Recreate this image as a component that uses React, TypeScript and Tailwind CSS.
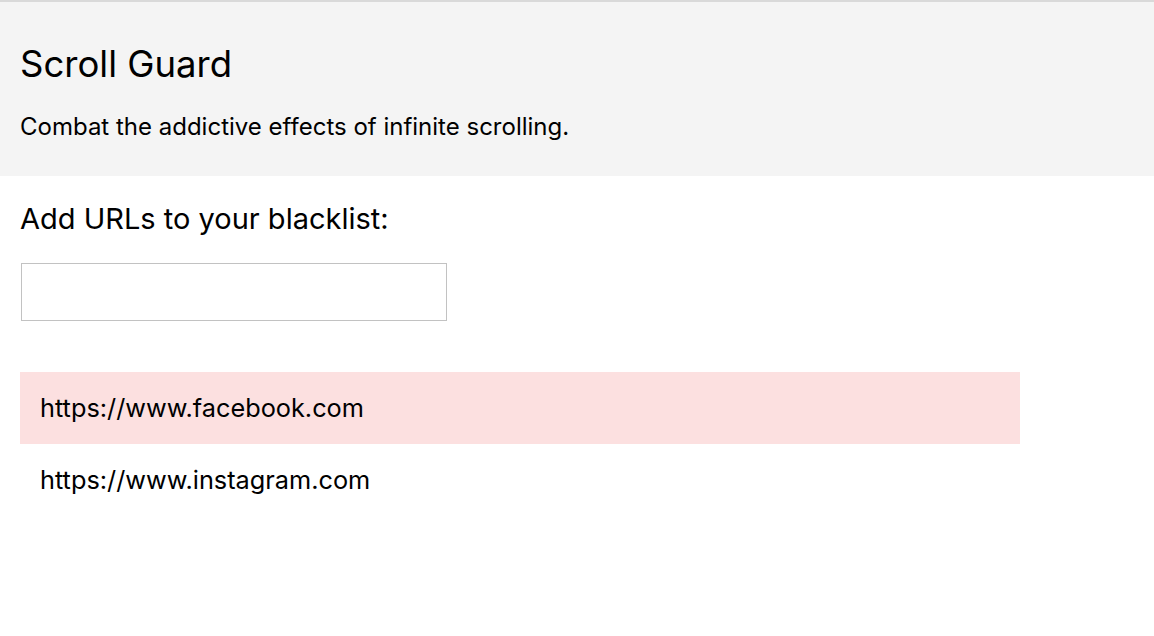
export default function App() {
  const urls = ["https://www.facebook.com", "https://www.instagram.com"];
  return (
    <div className="min-h-screen bg-white text-black font-['Inter','Liberation_Sans',Arial,sans-serif]">
      <div className="border-t-2 border-[#d9d9d9] bg-[#f4f4f4] px-5 pt-[40px] pb-[35px]">
        <h1 className="text-[36.5px] leading-[44px]">Scroll Guard</h1>
        <p className="mt-[27px] text-[24px] leading-[28px]">Combat the addictive effects of infinite scrolling.</p>
      </div>
      <div className="px-5 pt-[26px]">
        <h2 className="text-[29px] leading-[34px]">Add URLs to your blacklist:</h2>
        <input type="text" className="ml-px mt-[27px] block h-[58px] w-[426px] border border-[#c2c2c2] bg-white px-3 text-[22px] outline-none" />
        <ul className="mt-[51px] w-[1000px]">
          {urls.map((u, i) => (
            <li key={u} className={`flex h-[72px] items-center px-5 text-[25.3px] ${i === 0 ? "bg-[#fce0e0]" : ""}`}>
              {u}
            </li>
          ))}
        </ul>
      </div>
    </div>
  );
}
